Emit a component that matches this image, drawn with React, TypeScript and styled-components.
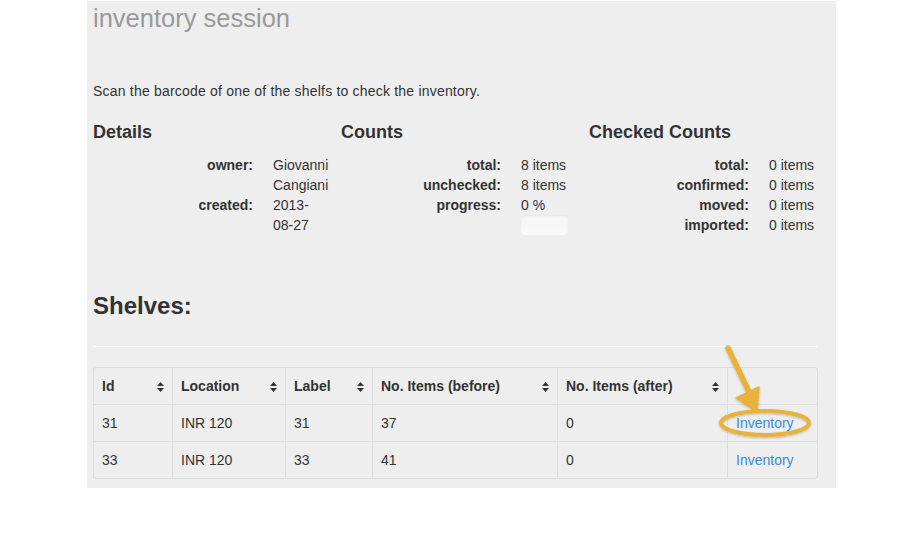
import React from "react";
import styled, { createGlobalStyle } from "styled-components";

const GlobalStyle = createGlobalStyle`
  html, body {
    margin: 0;
    padding: 0;
    background: #ffffff;
  }
  body {
    font-family: "Liberation Sans", Arial, Helvetica, sans-serif;
    font-size: 14px;
    line-height: 20px;
    color: #333333;
  }
`;

const Panel = styled.div`
  margin: 1px 0 0 87px;
  width: 724px;
  padding: 0 19px 9px 6px;
  background: #eeeeee;
`;

const Title = styled.h1`
  margin: 0;
  font-size: 25.5px;
  line-height: 34px;
  font-weight: normal;
  color: #999999;
`;

const Lead = styled.p`
  margin: 46px 0 0;
  letter-spacing: 0.2px;
`;

const Row = styled.div`
  display: grid;
  grid-template-columns: repeat(3, 228px);
  column-gap: 20px;
  margin-top: 19px;
`;

const Heading = styled.h3`
  margin: 0 0 11px;
  font-size: 18px;
  line-height: 24px;
  font-weight: bold;
`;

const Dl = styled.dl`
  display: grid;
  grid-template-columns: 160px 48px;
  column-gap: 20px;
  margin: 0;
`;

const Dt = styled.dt`
  font-weight: bold;
  text-align: right;
`;

const Dd = styled.dd`
  margin: 0;
`;

const Progress = styled.div`
  grid-column: 2;
  height: 20px;
  width: 47px;
  border-radius: 4px;
  background: linear-gradient(#f5f5f5, #f9f9f9);
  box-shadow: inset 0 1px 2px rgba(0, 0, 0, 0.06);
`;

const SectionTitle = styled.h2`
  margin: 56px 0 0;
  font-size: 24px;
  line-height: 30px;
  font-weight: bold;
`;

const Rule = styled.hr`
  margin: 24px 0 20px;
  border: 0;
  border-top: 1px solid #eeeeee;
  border-bottom: 1px solid #ffffff;
`;

const TableWrap = styled.div`
  position: relative;
`;

const Table = styled.table`
  width: 724px;
  table-layout: fixed;
  border-collapse: separate;
  border-spacing: 0;
  border: 1px solid #dddddd;
  border-left: 0;
  border-radius: 4px;
`;

const Th = styled.th`
  position: relative;
  padding: 8px;
  text-align: left;
  font-weight: bold;
  border-left: 1px solid #dddddd;
`;

const Td = styled.td`
  padding: 8px;
  border-left: 1px solid #dddddd;
  border-top: 1px solid #dddddd;
`;

const SortIcon = styled.svg`
  position: absolute;
  right: 8px;
  top: 14px;
`;

const Link = styled.a`
  color: #3b8bd9;
  text-decoration: none;
`;

const Callout = styled.svg`
  position: absolute;
  left: 620px;
  top: -25px;
  pointer-events: none;
  overflow: visible;
`;

const Sort = () => (
  <SortIcon width="7" height="10" viewBox="0 0 7 10">
    <polygon points="0,4 3.5,0 7,4" fill="#333" />
    <polygon points="0,6 3.5,10 7,6" fill="#333" />
  </SortIcon>
);

const details = [
  { k: "owner:", v: "Giovanni Cangiani" },
  { k: "created:", v: "2013-08-27" },
];
const counts = [
  { k: "total:", v: "8 items" },
  { k: "unchecked:", v: "8 items" },
  { k: "progress:", v: "0 %" },
];
const checked = [
  { k: "total:", v: "0 items" },
  { k: "confirmed:", v: "0 items" },
  { k: "moved:", v: "0 items" },
  { k: "imported:", v: "0 items" },
];

const columns = [
  { name: "Id", width: 79, sort: true },
  { name: "Location", width: 113, sort: true },
  { name: "Label", width: 87, sort: true },
  { name: "No. Items (before)", width: 185, sort: true },
  { name: "No. Items (after)", width: 170, sort: true },
  { name: "", width: 90, sort: false },
];

const shelves = [
  { id: 31, location: "INR 120", label: 31, before: 37, after: 0 },
  { id: 33, location: "INR 120", label: 33, before: 41, after: 0 },
];

function Pairs({ items }: { items: { k: string; v: string }[] }) {
  return (
    <>
      {items.map((it) => (
        <React.Fragment key={it.k}>
          <Dt>{it.k}</Dt>
          <Dd>{it.v}</Dd>
        </React.Fragment>
      ))}
    </>
  );
}

export default function App() {
  return (
    <>
      <GlobalStyle />
      <Panel>
        <Title>inventory session</Title>
        <Lead>Scan the barcode of one of the shelfs to check the inventory.</Lead>

        <Row>
          <div>
            <Heading>Details</Heading>
            <Dl>
              <Pairs items={details} />
            </Dl>
          </div>
          <div>
            <Heading>Counts</Heading>
            <Dl>
              <Pairs items={counts} />
              <Progress />
            </Dl>
          </div>
          <div>
            <Heading>Checked Counts</Heading>
            <Dl>
              <Pairs items={checked} />
            </Dl>
          </div>
        </Row>

        <SectionTitle>Shelves:</SectionTitle>
        <Rule />

        <TableWrap>
          <Table>
            <colgroup>
              {columns.map((c, i) => (
                <col key={i} style={{ width: c.width }} />
              ))}
            </colgroup>
            <thead>
              <tr>
                {columns.map((c, i) => (
                  <Th key={i}>
                    {c.name}
                    {c.sort && <Sort />}
                  </Th>
                ))}
              </tr>
            </thead>
            <tbody>
              {shelves.map((s) => (
                <tr key={s.id}>
                  <Td>{s.id}</Td>
                  <Td>{s.location}</Td>
                  <Td>{s.label}</Td>
                  <Td>{s.before}</Td>
                  <Td>{s.after}</Td>
                  <Td>
                    <Link href="#">Inventory</Link>
                  </Td>
                </tr>
              ))}
            </tbody>
          </Table>

          <Callout width="110" height="100" viewBox="0 0 110 100">
            <defs>
              <filter id="sh" x="-20%" y="-20%" width="140%" height="140%">
                <feDropShadow dx="0" dy="1" stdDeviation="1" floodColor="#000" floodOpacity="0.25" />
              </filter>
            </defs>
            <g filter="url(#sh)" fill="none" stroke="#e8b23a">
              <line x1="15" y1="6" x2="37" y2="52" strokeWidth="5.5" strokeLinecap="round" />
              <polygon points="23,56 46,45 44,70" fill="#e8b23a" stroke="#e8b23a" strokeWidth="1.5" strokeLinejoin="round" />
              <ellipse cx="52" cy="81" rx="44" ry="12" strokeWidth="4" />
            </g>
          </Callout>
        </TableWrap>
      </Panel>
    </>
  );
}
